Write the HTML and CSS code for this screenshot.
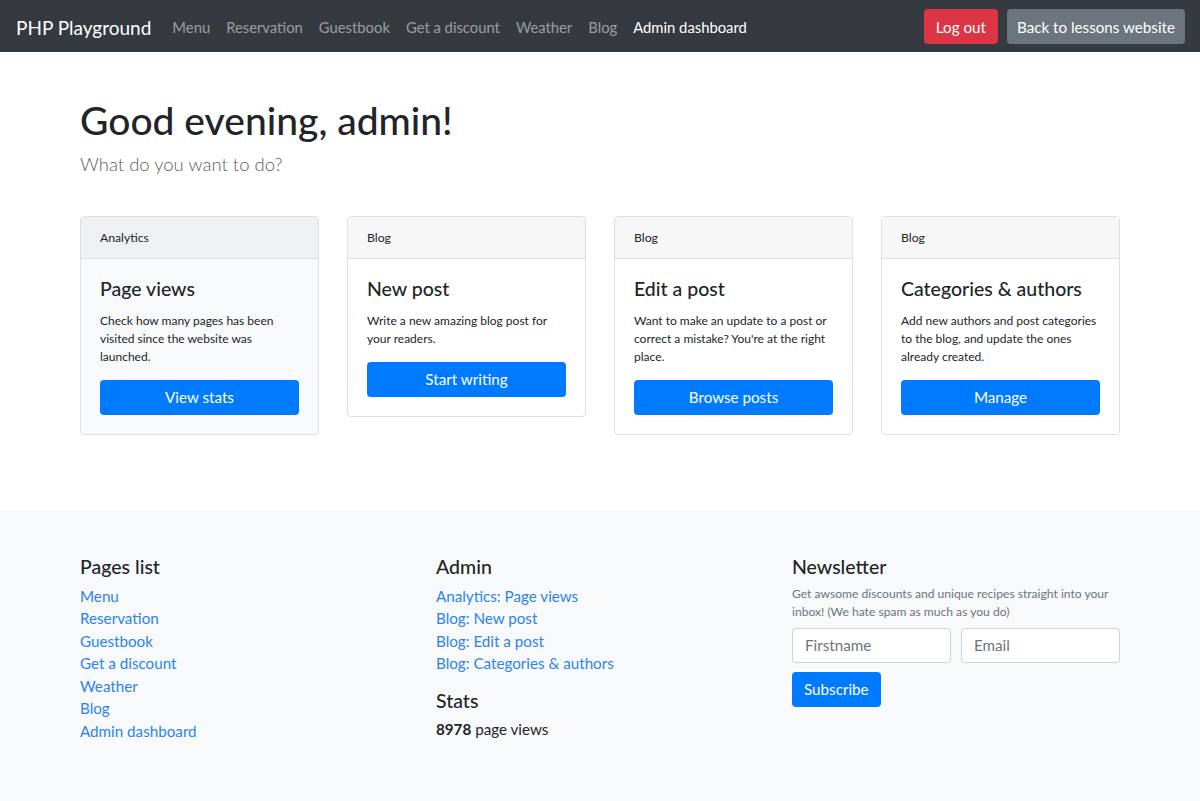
FILE: index.html
```html
<!DOCTYPE html>
<html lang="en">
<head>
<meta charset="utf-8">
<title>PHP Playground - Admin dashboard</title>
<link rel="stylesheet" href="styles.css">
</head>
<body>
<nav class="navbar">
  <a class="brand" href="#">PHP Playground</a>
  <ul class="nav-links">
    <li><a href="#">Menu</a></li>
    <li><a href="#">Reservation</a></li>
    <li><a href="#">Guestbook</a></li>
    <li><a href="#">Get a discount</a></li>
    <li><a href="#">Weather</a></li>
    <li><a href="#">Blog</a></li>
    <li><a href="#" class="active">Admin dashboard</a></li>
  </ul>
  <div class="nav-actions">
    <a href="#" class="btn btn-danger">Log out</a>
    <a href="#" class="btn btn-secondary btn-back">Back to lessons website</a>
  </div>
</nav>

<main class="content">
  <h1 class="greeting">Good evening, admin!</h1>
  <p class="lead">What do you want to do?</p>

  <div class="cards">
    <div class="card card-light">
      <div class="card-header">Analytics</div>
      <div class="card-body">
        <h5 class="card-title">Page views</h5>
        <p class="card-text">Check how many pages has been visited since the website was launched.</p>
        <a href="#" class="btn btn-primary btn-block">View stats</a>
      </div>
    </div>
    <div class="card">
      <div class="card-header">Blog</div>
      <div class="card-body">
        <h5 class="card-title">New post</h5>
        <p class="card-text">Write a new amazing blog post for your readers.</p>
        <a href="#" class="btn btn-primary btn-block">Start writing</a>
      </div>
    </div>
    <div class="card">
      <div class="card-header">Blog</div>
      <div class="card-body">
        <h5 class="card-title">Edit a post</h5>
        <p class="card-text">Want to make an update to a post or correct a mistake? You're at the right place.</p>
        <a href="#" class="btn btn-primary btn-block">Browse posts</a>
      </div>
    </div>
    <div class="card">
      <div class="card-header">Blog</div>
      <div class="card-body">
        <h5 class="card-title">Categories &amp; authors</h5>
        <p class="card-text">Add new authors and post categories to the blog, and update the ones already created.</p>
        <a href="#" class="btn btn-primary btn-block">Manage</a>
      </div>
    </div>
  </div>
</main>

<footer class="footer">
  <div class="footer-inner">
    <div class="footer-col">
      <h5 class="footer-title">Pages list</h5>
      <ul class="footer-links">
        <li><a href="#">Menu</a></li>
        <li><a href="#">Reservation</a></li>
        <li><a href="#">Guestbook</a></li>
        <li><a href="#">Get a discount</a></li>
        <li><a href="#">Weather</a></li>
        <li><a href="#">Blog</a></li>
        <li><a href="#">Admin dashboard</a></li>
      </ul>
    </div>
    <div class="footer-col">
      <h5 class="footer-title">Admin</h5>
      <ul class="footer-links">
        <li><a href="#">Analytics: Page views</a></li>
        <li><a href="#">Blog: New post</a></li>
        <li><a href="#">Blog: Edit a post</a></li>
        <li><a href="#">Blog: Categories &amp; authors</a></li>
      </ul>
      <h5 class="footer-title stats-title">Stats</h5>
      <p class="stats"><strong>8978</strong> page views</p>
    </div>
    <div class="footer-col">
      <h5 class="footer-title">Newsletter</h5>
      <p class="newsletter-text">Get awsome discounts and unique recipes straight into your inbox! (We hate spam as much as you do)</p>
      <form class="newsletter-form">
        <div class="form-row">
          <input type="text" class="form-control" placeholder="Firstname">
          <input type="email" class="form-control" placeholder="Email">
        </div>
        <button type="button" class="btn btn-primary btn-subscribe">Subscribe</button>
      </form>
    </div>
  </div>
</footer>
</body>
</html>
```

FILE: styles.css
```css
* { box-sizing: border-box; }

html, body {
  margin: 0;
  padding: 0;
}

body {
  font-family: "Lato", "Open Sans", "Liberation Sans", sans-serif;
  font-size: 15px;
  line-height: 1.4;
  color: #212529;
  background: #fff;
  min-height: 100vh;
  display: flex;
  flex-direction: column;
}

a { text-decoration: none; }

/* Navbar */
.navbar {
  display: flex;
  align-items: center;
  height: 52px;
  padding: 0 15px 0 16px;
  background: #343a40;
}

.brand {
  color: #fff;
  font-size: 19px;
  margin-right: 13px;
  padding-top: 4px;
}

.nav-links {
  display: flex;
  list-style: none;
  margin: 0;
  padding: 3px 0 0;
}

.nav-links a {
  display: block;
  padding: 0 8px;
  color: rgba(255, 255, 255, 0.5);
  font-size: 14.8px;
}

.nav-links a.active { color: #fff; }

.nav-actions {
  margin-left: auto;
  display: flex;
  gap: 9px;
  padding-top: 1px;
}

.nav-actions .btn { padding-top: 2px; }
.nav-actions .btn-back { padding-left: 10px; padding-right: 10px; }

.btn {
  display: inline-flex;
  align-items: center;
  justify-content: center;
  height: 35px;
  padding: 0 12px;
  border: 0;
  border-radius: 4px;
  font-family: inherit;
  font-size: 15.2px;
  color: #fff;
  cursor: pointer;
}

.btn-danger { background: #dc3545; }
.btn-secondary { background: #6c757d; }
.btn-primary { background: #007bff; }
.btn-block { display: flex; width: 100%; }

/* Main */
.content {
  width: 1040px;
  margin-left: 80px;
  padding-top: 45px;
  padding-bottom: 75px;
}

.greeting {
  margin: 0;
  font-size: 39px;
  font-weight: 500;
  line-height: 1.2;
}

.lead {
  margin: 8px 0 0;
  font-size: 18.5px;
  font-weight: 300;
  color: #5a6066;
}

.cards {
  display: grid;
  grid-template-columns: repeat(4, 1fr);
  gap: 28px;
  align-items: start;
  margin-top: 38px;
}

.card {
  border: 1px solid #dfdfdf;
  border-radius: 4px;
  background: #fff;
  overflow: hidden;
}

.card-header {
  height: 42px;
  display: flex;
  align-items: center;
  padding: 0 19px;
  font-size: 12.2px;
  background: #f7f7f7;
  border-bottom: 1px solid #dfdfdf;
}

.card-light { background: #f8f9fa; }
.card-light .card-header { background: #eef0f2; }

.card-body {
  padding: 18px 19px 19px;
}

.card-title {
  margin: 0 0 11px;
  font-size: 19.5px;
  font-weight: 500;
  line-height: 24px;
}

.card-text {
  margin: 0 0 14px;
  font-size: 12px;
  line-height: 18px;
  color: #212529;
}

/* Footer */
.footer {
  flex: 1;
  background: #f8f9fa;
  padding: 45px 0 48px;
}

.footer-inner {
  margin-left: 80px;
  display: grid;
  grid-template-columns: 356px 356px 328px;
}

.footer-title {
  margin: 0 0 6px;
  font-size: 19.5px;
  font-weight: 500;
  line-height: 24px;
}

.stats-title { margin-top: 14px; }

.footer-links {
  list-style: none;
  margin: 0;
  padding: 0;
}

.footer-links li { line-height: 22.5px; }

.footer-links a {
  color: #2b84ee;
  font-size: 15.2px;
}

.stats {
  margin: 6px 0 0;
  font-size: 15.2px;
}
.stats strong { font-weight: 700; }

.newsletter-text {
  margin: 0 0 7px;
  font-size: 12.1px;
  line-height: 18px;
  color: #6c757d;
}

.form-row {
  display: flex;
  gap: 10px;
  margin-bottom: 9px;
}

.form-control {
  flex: 1;
  min-width: 0;
  height: 35px;
  padding: 0 12px;
  border: 1px solid #ced4da;
  border-radius: 4px;
  font-family: inherit;
  font-size: 15.2px;
  color: #495057;
  background: #fff;
}

.form-control::placeholder { color: #6c757d; }

.btn-subscribe { padding: 0 12px; }
```
